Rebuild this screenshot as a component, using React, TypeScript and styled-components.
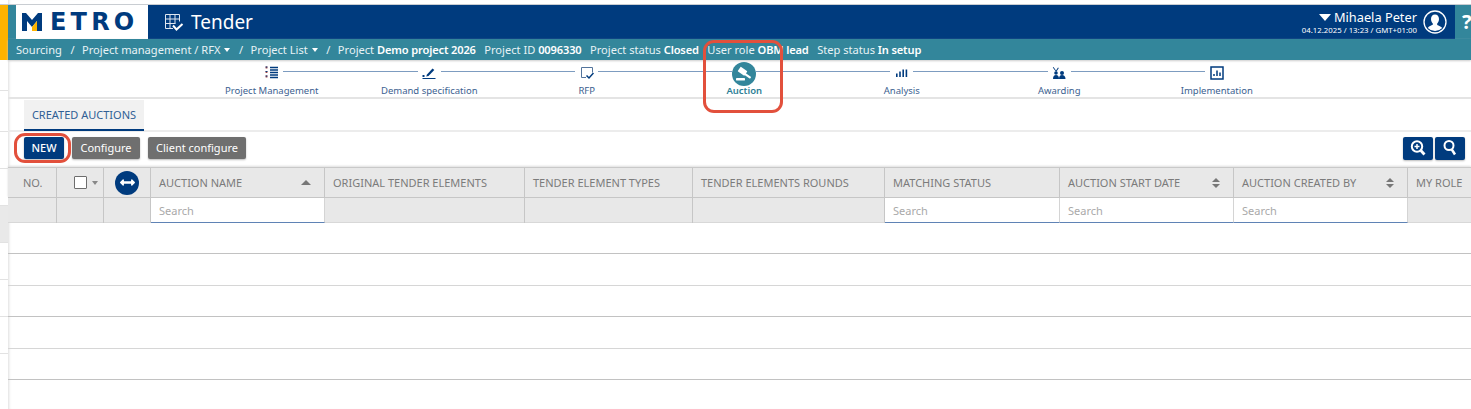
import React from "react";
import styled, { createGlobalStyle } from "styled-components";
import { FaArrowsAltH } from "react-icons/fa";

const Global = createGlobalStyle`
  html, body { margin: 0; padding: 0; background: #fff; overflow: hidden; }
  body { font-family: "Noto Sans", "Open Sans", sans-serif; }
  * { box-sizing: border-box; }
`;

const NAVY = "#003b7e";
const TEAL = "#33869b";

const Page = styled.div`
  position: relative;
  display: flex;
  width: 1471px;
  height: 409px;
  overflow: hidden;
  background: #fff;
`;

const Rail = styled.aside`
  flex: 0 0 8px;
  display: flex;
  flex-direction: column;
  padding-top: 5px;
`;
const RailAccent = styled.div`
  height: 55px;
  background: #fdb300;
`;
const RailRow = styled.div<{ $h: number; $fill?: boolean }>`
  height: ${(p) => p.$h}px;
  flex: none;
  border-bottom: 1px solid #e2e2e2;
  background: ${(p) => (p.$fill ? "#e9e9e9" : "#fff")};
`;

const Main = styled.main`
  flex: 1;
  min-width: 0;
  display: flex;
  flex-direction: column;
  padding-top: 4px;
  position: relative;
  box-shadow: inset 3px 0 3px -2px #ddd;
`;
const TopEdge = styled.div`
  height: 1px;
  margin-left: -8px;
  background: #c9cdd2;
  flex: none;
`;

const Header = styled.header`
  flex: none;
  height: 34px;
  display: flex;
  background: ${TEAL};
`;
const LogoBox = styled.div`
  flex: none;
  margin-left: 8px;
  width: 132px;
  display: flex;
  align-items: center;
  gap: 8px;
  padding-left: 6px;
  background: #fff;
`;
const LogoWord = styled.span`
  font-family: "DejaVu Sans", sans-serif;
  font-weight: 700;
  font-size: 24px;
  line-height: 1;
  letter-spacing: 4.2px;
  color: ${NAVY};
`;
const TitleBar = styled.div`
  flex: 1;
  display: flex;
  align-items: center;
  background: ${NAVY};
  padding: 0 8px 0 16px;
  color: #fff;
`;
const AppTitle = styled.div`
  font-size: 19px;
  line-height: 1;
  margin-left: 7px;
  flex: 1;
`;
const UserBlock = styled.div`
  display: flex;
  flex-direction: column;
  align-items: flex-end;
  margin-right: 6px;
`;
const UserName = styled.div`
  display: flex;
  align-items: center;
  gap: 3px;
  font-size: 12.8px;
  line-height: 15px;
`;
const UserCaret = styled.span`
  width: 0;
  height: 0;
  border-left: 6px solid transparent;
  border-right: 6px solid transparent;
  border-top: 7px solid #fff;
`;
const UserDate = styled.div`
  font-size: 7.8px;
  line-height: 10px;
`;
const HelpBox = styled.div`
  flex: none;
  width: 16px;
  padding-left: 7px;
  font-size: 20px;
  font-weight: 700;
  line-height: 34px;
  color: #fff;
  white-space: nowrap;
  overflow: hidden;
`;

const Crumbs = styled.nav`
  flex: none;
  height: 21px;
  display: flex;
  align-items: center;
  padding-left: 8px;
  background: ${TEAL};
  color: #e8f3f6;
  font-size: 11.1px;
  white-space: nowrap;
  box-shadow: 0 1px 2px #ccc;
`;
const Sep = styled.span`
  margin: 0 7.5px 0 8.5px;
`;
const Drop = styled.span`
  display: inline-block;
  width: 0;
  height: 0;
  margin-left: 4px;
  border-left: 3.5px solid transparent;
  border-right: 3.5px solid transparent;
  border-top: 4px solid #fff;
`;
const Meta = styled.span`
  margin-right: 8.5px;
  b { font-weight: 600; color: #fff; letter-spacing: -0.15px; }
`;

const Stepper = styled.div`
  flex: none;
  height: 39px;
  display: flex;
  padding-left: 185px;
  border-bottom: 2px solid #e4e4e4;
`;
const Step = styled.div`
  flex: 0 0 157.5px;
  display: flex;
  flex-direction: column;
  align-items: stretch;
`;
const StepTop = styled.div`
  height: 22px;
  display: flex;
  align-items: flex-start;
`;
const StepLine = styled.div<{ $hidden?: boolean }>`
  flex: 1;
  height: 1px;
  margin-top: 11px;
  background: ${(p) => (p.$hidden ? "transparent" : "#7d9cc0")};
`;
const StepIcon = styled.div<{ $active?: boolean }>`
  flex: none;
  width: 23px;
  height: 23px;
  margin-top: 1px;
  display: flex;
  align-items: center;
  justify-content: center;
  color: ${NAVY};
  ${(p) =>
    p.$active
      ? `background:${TEAL}; color:#fff; border-radius:50%; width:24px; height:24px; margin-top:2px;`
      : ""}
`;
const StepLabel = styled.div<{ $active?: boolean }>`
  margin-top: 2px;
  text-align: center;
  font-size: 9.5px;
  line-height: 14px;
  white-space: nowrap;
  color: ${(p) => (p.$active ? "#2e7f96" : "#3c6190")};
  font-weight: ${(p) => (p.$active ? 600 : 400)};
`;

const Tabs = styled.div`
  flex: none;
  height: 33px;
  padding: 1px 0 0 16px;
  border-bottom: 2px solid #ececec;
`;
const Tab = styled.div`
  display: inline-block;
  width: 120px;
  height: 31px;
  background: #f1f1f1;
  border-bottom: 2px solid ${NAVY};
  color: #2f5f95;
  font-size: 11px;
  line-height: 30px;
  text-align: center;
`;

const Toolbar = styled.div`
  flex: none;
  height: 35px;
  display: flex;
  align-items: center;
  gap: 8px;
  padding: 0 6px 3px 16px;
`;
const Button = styled.button<{ $primary?: boolean; $w: number }>`
  width: ${(p) => p.$w}px;
  height: 22px;
  padding: 0;
  border: 0;
  border-radius: 2px;
  font-family: inherit;
  font-size: 11px;
  line-height: 22px;
  color: #fff;
  background: ${(p) => (p.$primary ? NAVY : "#6f6f6f")};
  box-shadow: 0 1px 2px #bbb;
  font-weight: ${(p) => (p.$primary ? 500 : 400)};
`;
const ToolSpacer = styled.div`
  flex: 1;
`;
const IconGroup = styled.div`
  display: flex;
  gap: 2px;
`;
const IconButton = styled.button`
  width: 30px;
  height: 23px;
  padding: 0;
  border: 0;
  border-radius: 2px;
  display: flex;
  align-items: center;
  justify-content: center;
  background: ${NAVY};
  box-shadow: 0 1px 2px #bbb;
`;

const GRID = "49px 47px 47px 174px 200px 168px 192px 175px 174px 174px 1fr";
const HeadRow = styled.div`
  flex: none;
  height: 31px;
  display: grid;
  grid-template-columns: ${GRID};
  background: #e8e8e8;
  border-top: 1px solid #c9c9c9;
  border-bottom: 1px solid #c6c6c6;
  box-shadow: 0 -1px 2px #ddd;
`;
const HeadCell = styled.div<{ $center?: boolean }>`
  display: flex;
  align-items: center;
  justify-content: ${(p) => (p.$center ? "center" : "space-between")};
  padding: 0 ${(p) => (p.$center ? 0 : 14)}px 0 ${(p) => (p.$center ? 0 : 8)}px;
  border-right: 1px solid #c6c6c6;
  font-size: 11px;
  color: #7b7b7b;
  white-space: nowrap;
  &:last-child { border-right: 0; padding-right: 0; }
`;
const NoCell = styled(HeadCell)`
  padding-left: 15px;
`;
const CheckCell = styled(HeadCell)`
  justify-content: flex-start;
  padding: 0 0 0 17px;
`;
const Check = styled.span`
  flex: none;
  width: 13px;
  height: 13px;
  margin-right: 3px;
  background: #fff;
  border: 1.5px solid #6d6d6d;
  border-radius: 1px;
`;
const SmallDown = styled.span`
  flex: none;
  width: 0;
  height: 0;
  border-left: 3.5px solid transparent;
  border-right: 3.5px solid transparent;
  border-top: 4px solid #888;
  margin-left: 2px;
`;
const Round = styled.span`
  width: 24px;
  height: 24px;
  border-radius: 50%;
  background: ${NAVY};
  color: #fff;
  display: flex;
  align-items: center;
  justify-content: center;
`;
const SortUp = styled.span`
  width: 0;
  height: 0;
  border-left: 5px solid transparent;
  border-right: 5px solid transparent;
  border-bottom: 5px solid #777;
  margin-right: -1px;
`;
const SortBoth = styled.span`
  width: 8px;
  display: flex;
  flex-direction: column;
  gap: 2px;
  margin-right: -1px;
  &::before, &::after {
    content: "";
    width: 0;
    height: 0;
    border-left: 4px solid transparent;
    border-right: 4px solid transparent;
  }
  &::before { border-bottom: 4px solid #777; }
  &::after { border-top: 4px solid #777; }
`;

const FilterRow = styled.div`
  flex: none;
  height: 24.5px;
  display: grid;
  grid-template-columns: ${GRID};
  background: #e8e8e8;
  border-bottom: 1px solid #d8d8d8;
`;
const FilterCell = styled.div`
  border-right: 1px solid #c6c6c6;
  &:last-child { border-right: 0; }
`;
const SearchCell = styled.div`
  height: 24.5px;
  padding-left: 8px;
  background: #fff;
  border-bottom: 1.5px solid #5f83b5;
  border-right: 1px solid #d4d4d4;
  font-size: 11px;
  line-height: 26px;
  color: #a9a9a9;
`;

const Row = styled.div<{ $soft?: boolean }>`
  flex: none;
  height: 31.5px;
  border-bottom: 1px solid ${(p) => (p.$soft ? "#d6d6d6" : "#c2c2c2")};
`;

const Callout = styled.div<{ $x: number; $y: number; $w: number; $h: number; $r: number }>`
  position: absolute;
  left: ${(p) => p.$x}px;
  top: ${(p) => p.$y}px;
  width: ${(p) => p.$w}px;
  height: ${(p) => p.$h}px;
  border: 3px solid #e2503c;
  border-radius: ${(p) => p.$r}px;
  pointer-events: none;
`;

const ListIcon = () => (
  <svg width="14" height="14" viewBox="0 0 14 14" fill="none" stroke="currentColor">
    <path d="M1.500 0.500v2M1.500 5v2M1.500 9.500v2" strokeWidth="1.800" stroke="#a94442" />
    <path d="M1.500 0.500v1M1.500 5v1M1.500 9.500v1" strokeWidth="1.800" />
    <path d="M5 1.500h8M5 4h8M5 6.500h8M5 9h8M5 11.500h8" strokeWidth="1.300" />
  </svg>
);
const PenIcon = () => (
  <svg width="14" height="14" viewBox="0 0 14 14" fill="currentColor">
    <path d="M5 8.500l5.500-6 1.800 1.400-5.800 6-2.300.6z" />
    <rect x="0.500" y="12" width="13" height="1" />
    <rect x="0.500" y="9" width="2" height="2" />
  </svg>
);
const RfpIcon = () => (
  <svg width="14" height="14" viewBox="0 0 14 14" fill="none" stroke="#53749c" strokeWidth="1">
    <path d="M6 11.500H1.500v-10h11v5" />
    <path d="M6.500 9.500l2.500 2.500 4.500-5" stroke={NAVY} strokeWidth="1.500" />
  </svg>
);
const GavelIcon = () => (
  <svg width="18" height="18" viewBox="0 0 18 18" fill="currentColor">
    <rect x="3.500" y="3.500" width="8" height="5.500" rx="0.500" transform="rotate(35 7.500 6.250)" />
    <rect x="9.500" y="7.500" width="7.500" height="2.200" rx="0.500" transform="rotate(35 9.500 8.500)" />
    <rect x="1" y="13" width="9" height="2.500" rx="0.400" />
  </svg>
);
const BarsIcon = () => (
  <svg width="14" height="14" viewBox="0 0 14 14" fill="currentColor">
    <rect x="1" y="7.500" width="1.600" height="3.500" />
    <rect x="4.200" y="5.500" width="1.600" height="5.500" />
    <rect x="7.400" y="3.500" width="1.600" height="7.500" />
    <rect x="10.600" y="3.500" width="1.600" height="7.500" />
  </svg>
);
const AwardIcon = () => (
  <svg width="14" height="14" viewBox="0 0 14 14" fill="currentColor">
    <circle cx="4" cy="7" r="1.800" />
    <path d="M1 13c0-2.500 1-4 3-4s3 1.500 3 4z" />
    <circle cx="10" cy="7" r="2" />
    <path d="M7 13c0-2.500 1-4 3-4s3.500 1.500 3.500 4z" />
    <path d="M1.500 1l2.500 3.500L6 1.500l.8.600L4.200 6 .8 1.500z" />
  </svg>
);
const ChartIcon = () => (
  <svg width="14" height="14" viewBox="0 0 14 14" fill="none">
    <rect x="1" y="1" width="12" height="12" stroke={NAVY} strokeWidth="1.500" />
    <path d="M4 10V8M7 10V4.500M10 10V6.500" stroke={NAVY} strokeWidth="1.500" />
  </svg>
);
const TableCheckIcon = () => (
  <svg width="20" height="19" viewBox="0 0 20 19" fill="none" stroke="#dfe7f1" strokeWidth="1">
    <path d="M9 15.500H1.500v-14h14v7M1.500 6h14M1.500 10.500h10M6 1.500v14M11 1.500v9" />
    <path d="M9 12.500l3.500 4 6-5.500" stroke="#fff" strokeWidth="2" />
  </svg>
);
const AvatarIcon = () => (
  <svg width="24" height="24" viewBox="0 0 24 24" fill="none">
    <circle cx="12" cy="12" r="11" stroke="#fff" strokeWidth="1.300" />
    <path
      d="M12 4.500c-2.500 0-4 2-4 4.500 0 2 1 3.500 1.800 4.500v1.300c-1.500.9-4 1.300-5 3.200A10 10 0 0 0 12 21a10 10 0 0 0 7.200-2.900c-1-1.900-3.500-2.300-5-3.200v-1.400c.8-1 1.800-2.500 1.800-4.500 0-2.500-1.500-4.500-4-4.500z"
      fill="#fff"
    />
  </svg>
);
const ZoomPlusIcon = () => (
  <svg width="18" height="18" viewBox="0 0 18 18" fill="none" stroke="#fff">
    <circle cx="8" cy="7.500" r="5.200" strokeWidth="2" />
    <path d="M11.800 11.500l3.700 4" strokeWidth="2.800" />
    <path d="M5.500 7.500h5M8 5v5" strokeWidth="1.500" />
  </svg>
);
const ZoomIcon = () => (
  <svg width="18" height="18" viewBox="0 0 18 18" fill="none" stroke="#fff">
    <circle cx="8" cy="6.500" r="4.500" strokeWidth="2" />
    <path d="M10.800 10.500l3.200 5" strokeWidth="2.500" />
  </svg>
);
const MetroM = () => (
  <svg width="20" height="18" viewBox="0 0 20 18">
    <path d="M0 18V0h4l6 7 6-7h4v18h-5V8l-5 6-5-6v10z" fill={NAVY} />
    <path d="M10 14l5-6v10h-5z" fill="#fdb300" />
  </svg>
);

const steps: { label: string; icon: React.ReactNode; active?: boolean }[] = [
  { label: "Project Management", icon: <ListIcon /> },
  { label: "Demand specification", icon: <PenIcon /> },
  { label: "RFP", icon: <RfpIcon /> },
  { label: "Auction", icon: <GavelIcon />, active: true },
  { label: "Analysis", icon: <BarsIcon /> },
  { label: "Awarding", icon: <AwardIcon /> },
  { label: "Implementation", icon: <ChartIcon /> },
];

export default function App() {
  return (
    <Page>
      <Global />
      <Rail>
        <RailAccent />
        <RailRow $h={31} />
        <RailRow $h={41} />
        <RailRow $h={37} />
        <RailRow $h={37} />
        <RailRow $h={37} $fill />
        <RailRow $h={37} />
        <RailRow $h={37} />
        <RailRow $h={37} />
      </Rail>
      <Main>
        <TopEdge />
        <Header>
          <LogoBox>
            <MetroM />
            <LogoWord>ETRO</LogoWord>
          </LogoBox>
          <TitleBar>
            <TableCheckIcon />
            <AppTitle>Tender</AppTitle>
            <UserBlock>
              <UserName>
                <UserCaret />
                Mihaela Peter
              </UserName>
              <UserDate>04.12.2025 / 13:23 / GMT+01:00</UserDate>
            </UserBlock>
            <AvatarIcon />
          </TitleBar>
          <HelpBox>?</HelpBox>
        </Header>
        <Crumbs>
          Sourcing<Sep>/</Sep>Project management / RFX<Drop /><Sep>/</Sep>Project List<Drop />
          <Sep>/</Sep>
          <Meta>Project <b>Demo project 2026</b></Meta>
          <Meta>Project ID <b>0096330</b></Meta>
          <Meta>Project status <b>Closed</b></Meta>
          <Meta>User role <b>OBM lead</b></Meta>
          <Meta>Step status <b>In setup</b></Meta>
        </Crumbs>
        <Stepper>
          {steps.map((s, i) => (
            <Step key={s.label}>
              <StepTop>
                <StepLine $hidden={i === 0} />
                <StepIcon $active={s.active}>{s.icon}</StepIcon>
                <StepLine $hidden={i === steps.length - 1} />
              </StepTop>
              <StepLabel $active={s.active}>{s.label}</StepLabel>
            </Step>
          ))}
        </Stepper>
        <Tabs>
          <Tab>CREATED AUCTIONS</Tab>
        </Tabs>
        <Toolbar>
          <Button $primary $w={40}>NEW</Button>
          <Button $w={68}>Configure</Button>
          <Button $w={98}>Client configure</Button>
          <ToolSpacer />
          <IconGroup>
            <IconButton aria-label="Advanced search"><ZoomPlusIcon /></IconButton>
            <IconButton aria-label="Search"><ZoomIcon /></IconButton>
          </IconGroup>
        </Toolbar>
        <HeadRow>
          <NoCell>NO.</NoCell>
          <CheckCell><Check /><SmallDown /></CheckCell>
          <HeadCell $center><Round><FaArrowsAltH size={15} /></Round></HeadCell>
          <HeadCell>AUCTION NAME<SortUp /></HeadCell>
          <HeadCell>ORIGINAL TENDER ELEMENTS</HeadCell>
          <HeadCell>TENDER ELEMENT TYPES</HeadCell>
          <HeadCell>TENDER ELEMENTS ROUNDS</HeadCell>
          <HeadCell>MATCHING STATUS</HeadCell>
          <HeadCell>AUCTION START DATE<SortBoth /></HeadCell>
          <HeadCell>AUCTION CREATED BY<SortBoth /></HeadCell>
          <HeadCell>MY ROLE</HeadCell>
        </HeadRow>
        <FilterRow>
          <FilterCell />
          <FilterCell />
          <FilterCell />
          <SearchCell>Search</SearchCell>
          <FilterCell />
          <FilterCell />
          <FilterCell />
          <SearchCell>Search</SearchCell>
          <SearchCell>Search</SearchCell>
          <SearchCell>Search</SearchCell>
          <FilterCell />
        </FilterRow>
        <Row />
        <Row $soft />
        <Row />
        <Row $soft />
        <Row />
      </Main>
      <Callout $x={703} $y={40} $w={80} $h={73} $r={11} />
      <Callout $x={14} $y={133} $w={57} $h={30} $r={11} />
    </Page>
  );
}
